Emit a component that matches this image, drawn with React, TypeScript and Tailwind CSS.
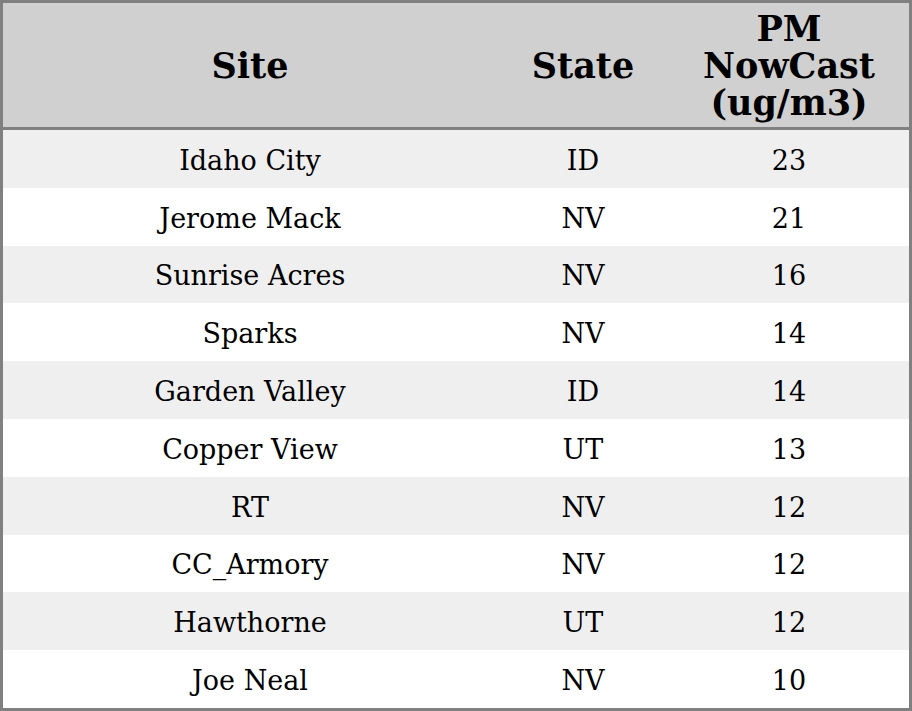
import React from "react";

const rows: [string, string, string][] = [
  ["Idaho City", "ID", "23"],
  ["Jerome Mack", "NV", "21"],
  ["Sunrise Acres", "NV", "16"],
  ["Sparks", "NV", "14"],
  ["Garden Valley", "ID", "14"],
  ["Copper View", "UT", "13"],
  ["RT", "NV", "12"],
  ["CC_Armory", "NV", "12"],
  ["Hawthorne", "UT", "12"],
  ["Joe Neal", "NV", "10"],
];

export default function App() {
  return (
    <div
      className="w-[912px] h-[711px] bg-white border-[3px] border-[#808080] flex flex-col text-black"
      style={{ fontFamily: '"DejaVu Serif", serif' }}
    >
      <div className="flex h-[127px] shrink-0 bg-[#d0d0d0] border-b-[3px] border-[#808080] font-bold text-[35px] leading-[37px] text-center">
        <div className="w-[494px] flex items-center justify-center">Site</div>
        <div className="w-[172px] flex items-center justify-center">State</div>
        <div className="flex-1 flex items-center justify-center pt-[1px]">
          PM
          <br />
          NowCast
          <br />
          (ug/m3)
        </div>
      </div>
      {rows.map((r, i) => (
        <div
          key={i}
          className={`flex flex-1 items-center pt-[3px] text-[27px] leading-none text-center ${i % 2 === 0 ? "bg-[#efefef]" : "bg-white"}`}
        >
          <div className="w-[494px]">{r[0]}</div>
          <div className="w-[172px]">{r[1]}</div>
          <div className="flex-1">{r[2]}</div>
        </div>
      ))}
    </div>
  );
}
